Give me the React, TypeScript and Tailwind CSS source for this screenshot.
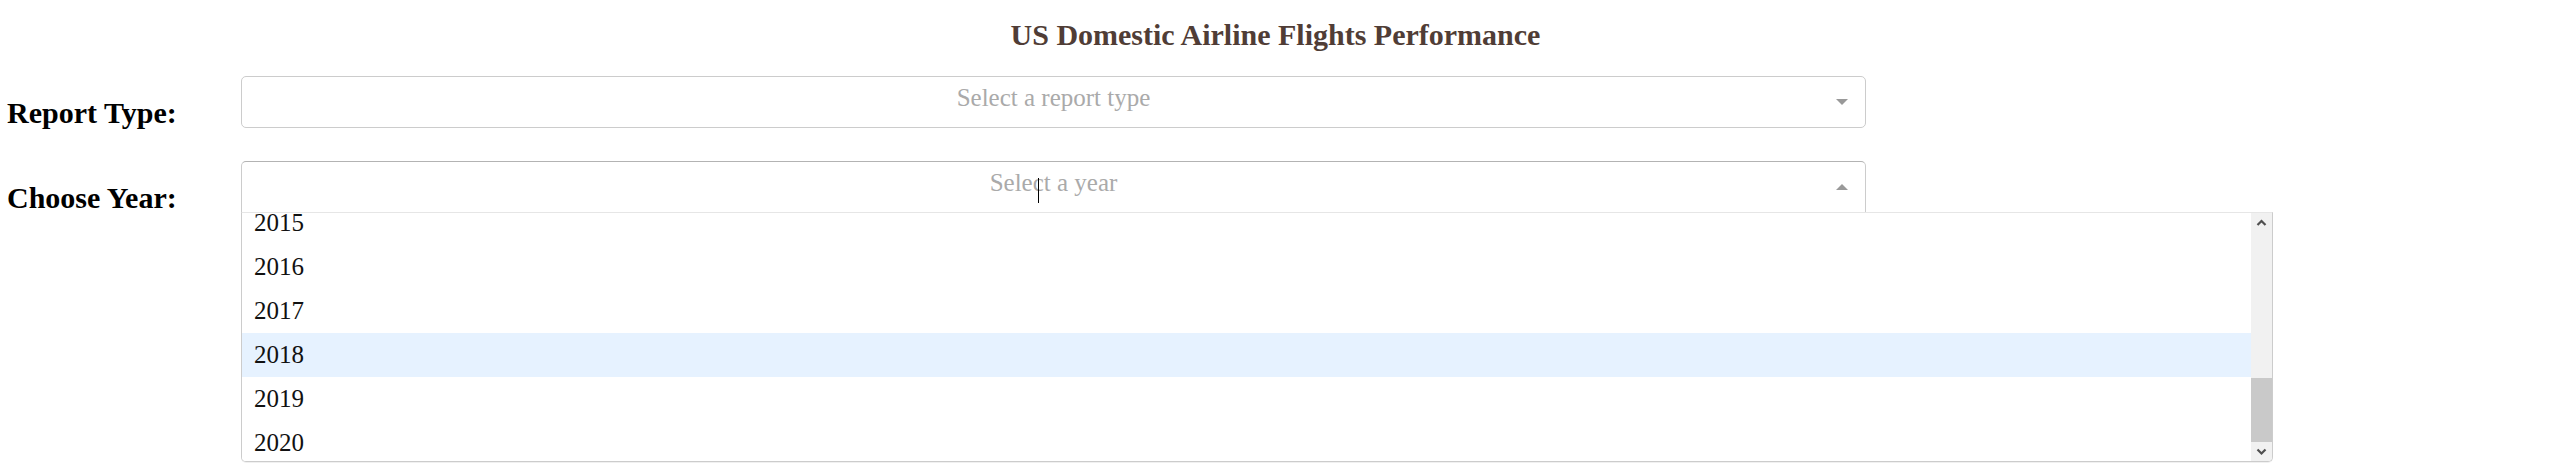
import React from "react";

const years = ["2015", "2016", "2017", "2018", "2019", "2020"];

function Arrow({ up }: { up?: boolean }) {
  return up ? (
    <span className="absolute right-[17px] top-1/2 -translate-y-1/2 w-0 h-0 border-x-[6px] border-x-transparent border-b-[6px] border-b-[#999]" />
  ) : (
    <span className="absolute right-[17px] top-1/2 -translate-y-1/2 w-0 h-0 border-x-[6px] border-x-transparent border-t-[6px] border-t-[#999]" />
  );
}

export default function App() {
  return (
    <div className="w-full h-[471px] bg-white overflow-hidden font-['Liberation_Serif',serif] text-black">
      <h1 className="pt-[18px] text-center text-[30px] leading-[34px] font-bold text-[#503D36]">
        US Domestic Airline Flights Performance
      </h1>

      <div className="mt-[24px] flex items-start">
        <div className="w-[241px] shrink-0 pl-[7px] pt-[21px] text-[30px] leading-[31px] font-bold">
          Report Type:
        </div>
        <div className="relative w-[1625px] h-[52px] border border-[#ccc] rounded-[5px] bg-white flex justify-center pt-[7px]">
          <span className="text-[25px] leading-[28px] text-[#aaa]">Select a report type</span>
          <Arrow />
        </div>
      </div>

      <div className="mt-[33px] flex items-start">
        <div className="w-[241px] shrink-0 pl-[7px] pt-[21px] text-[30px] leading-[31px] font-bold">
          Choose Year:
        </div>
        <div className="relative w-[1625px] h-[52px]">
          <div className="relative h-full border border-[#ccc] border-t-[#b3b3b3] rounded-t-[5px] bg-white flex justify-center pt-[7px]">
            <span className="text-[25px] leading-[28px] text-[#aaa]">Select a year</span>
            <span className="absolute left-[796px] top-[16px] w-[1px] h-[25px] bg-black" />
            <Arrow up />
          </div>
          <div className="absolute left-0 top-[51px] z-10 w-[2032px] h-[250px] flex bg-white border border-[#ccc] border-t-[#e6e6e6] rounded-b-[5px] shadow-[0_1px_0_rgba(0,0,0,0.06)] overflow-hidden">
            <div className="flex-1 overflow-hidden">
              <div className="-mt-[12px]">
                {years.map((y) => (
                  <div
                    key={y}
                    className={
                      "h-[44px] flex items-center pl-[12px] text-[25px] leading-[28px] text-[#111] " +
                      (y === "2018" ? "bg-[#e6f2ff]" : "bg-white")
                    }
                  >
                    {y}
                  </div>
                ))}
              </div>
            </div>
            <div className="w-[21px] shrink-0 flex flex-col bg-[#f1f1f1]">
              <div className="h-[21px] flex items-center justify-center">
                <svg width="21" height="21" viewBox="0 0 21 21">
                  <polyline points="6.5,12 10.5,8 14.5,12" fill="none" stroke="#505050" strokeWidth="2.2" />
                </svg>
              </div>
              <div className="flex-1 flex flex-col justify-end">
                <div className="h-[64px] bg-[#c9c9c9]" />
              </div>
              <div className="h-[19px] flex items-center justify-center">
                <svg width="21" height="19" viewBox="0 0 21 19">
                  <polyline points="6.5,7.5 10.5,11.5 14.5,7.5" fill="none" stroke="#505050" strokeWidth="2.2" />
                </svg>
              </div>
            </div>
          </div>
        </div>
      </div>
    </div>
  );
}
